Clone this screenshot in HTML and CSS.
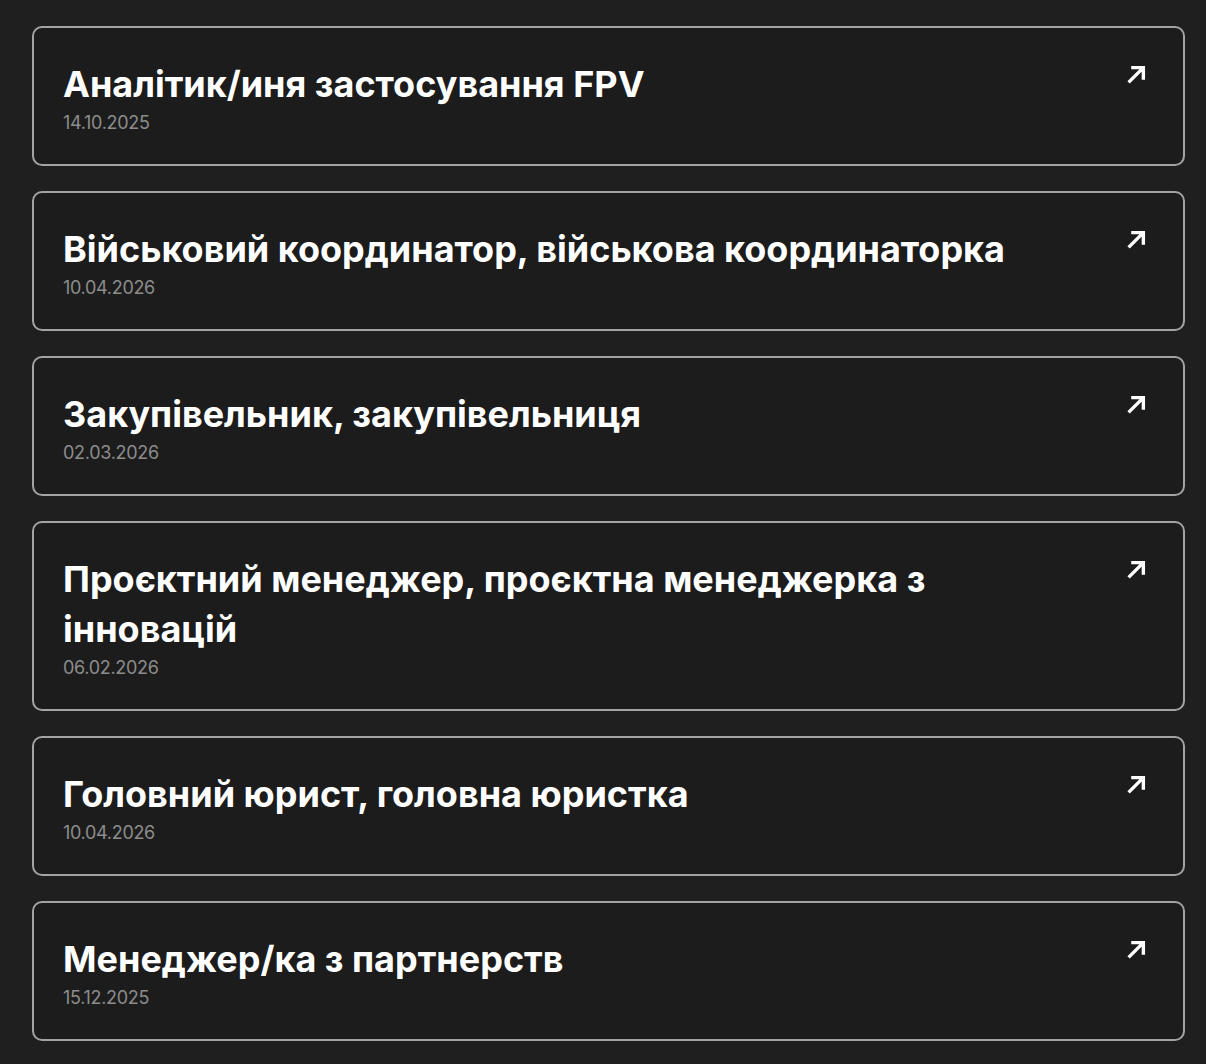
FILE: index.html
```html
<!DOCTYPE html>
<html lang="uk">
<head>
  <meta charset="UTF-8">
  <meta name="viewport" content="width=device-width, initial-scale=1.0">
  <title>Вакансії</title>
  <link rel="stylesheet" href="styles.css">
</head>
<body>
  <div class="vacancies">
    <a class="vacancy" href="#">
      <div class="vacancy-info">
        <h3>Аналітик/иня застосування FPV</h3>
        <span class="date">14.10.2025</span>
      </div>
      <svg class="arrow" viewBox="0 0 18 18"><path d="M1.5 16.5L15.5 2.5M4 2.5h11.5V14"/></svg>
    </a>
    <a class="vacancy" href="#">
      <div class="vacancy-info">
        <h3>Військовий координатор, військова координаторка</h3>
        <span class="date">10.04.2026</span>
      </div>
      <svg class="arrow" viewBox="0 0 18 18"><path d="M1.5 16.5L15.5 2.5M4 2.5h11.5V14"/></svg>
    </a>
    <a class="vacancy" href="#">
      <div class="vacancy-info">
        <h3>Закупівельник, закупівельниця</h3>
        <span class="date">02.03.2026</span>
      </div>
      <svg class="arrow" viewBox="0 0 18 18"><path d="M1.5 16.5L15.5 2.5M4 2.5h11.5V14"/></svg>
    </a>
    <a class="vacancy" href="#">
      <div class="vacancy-info">
        <h3>Проєктний менеджер, проєктна менеджерка з інновацій</h3>
        <span class="date">06.02.2026</span>
      </div>
      <svg class="arrow" viewBox="0 0 18 18"><path d="M1.5 16.5L15.5 2.5M4 2.5h11.5V14"/></svg>
    </a>
    <a class="vacancy" href="#">
      <div class="vacancy-info">
        <h3>Головний юрист, головна юристка</h3>
        <span class="date">10.04.2026</span>
      </div>
      <svg class="arrow" viewBox="0 0 18 18"><path d="M1.5 16.5L15.5 2.5M4 2.5h11.5V14"/></svg>
    </a>
    <a class="vacancy" href="#">
      <div class="vacancy-info">
        <h3>Менеджер/ка з партнерств</h3>
        <span class="date">15.12.2025</span>
      </div>
      <svg class="arrow" viewBox="0 0 18 18"><path d="M1.5 16.5L15.5 2.5M4 2.5h11.5V14"/></svg>
    </a>
  </div>
</body>
</html>
```

FILE: styles.css
```css
body {
  margin: 0;
  background-color: #1f1f1f;
  color: #fff;
  font-family: "Inter", "Noto Sans", sans-serif;
}

.vacancies {
  display: flex;
  flex-direction: column;
  gap: 25px;
  padding: 26px 21px 24px 32px;
}

.vacancy {
  display: flex;
  justify-content: space-between;
  align-items: flex-start;
  gap: 40px;
  padding: 31px 37px 29px 29px;
  border: 2px solid #a3a3a3;
  border-radius: 10px;
  background: #1c1c1c;
  color: #fff;
  text-decoration: none;
}

.vacancy h3 {
  margin: 0;
  font-size: 36px;
  line-height: 50px;
  font-weight: 700;
}

.date {
  display: block;
  margin-top: 2px;
  font-size: 18px;
  line-height: 24px;
  color: #8c8c8c;
  letter-spacing: -0.3px;
}

.arrow {
  flex-shrink: 0;
  width: 19px;
  height: 19px;
  margin-top: 6px;
  fill: none;
  stroke: #fff;
  stroke-width: 3.2;
}
```
